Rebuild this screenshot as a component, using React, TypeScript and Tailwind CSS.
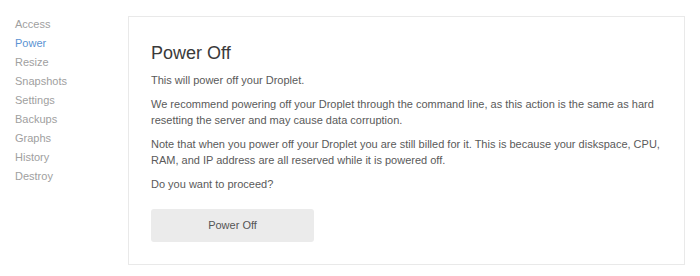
import React from 'react';

const menu = ['Access', 'Power', 'Resize', 'Snapshots', 'Settings', 'Backups', 'Graphs', 'History', 'Destroy'];

const App = () => {
    return (
        <div className="flex min-h-[276px] w-[700px] bg-white font-['Liberation_Sans',Arial,sans-serif]">
            {/* Side menu */}
            <ul className="w-[128px] shrink-0 pl-[15px] pt-[15px]">
                {menu.map((item) => (
                    <li
                        key={item}
                        className={`text-[11px] leading-[19px] ${item === 'Power' ? 'text-[#5b93d3]' : 'text-[#a0a0a0]'}`}
                    >
                        {item}
                    </li>
                ))}
            </ul>

            {/* Power off card */}
            <div className="mt-[16px] mb-[12px] w-[557px] border border-[#e9e9e9] bg-white px-[22px] pt-[24px] pb-[22px]">
                <h1 className="text-[18px] leading-[24px] text-[#3a3a3a] font-normal">Power Off</h1>
                <div className="mt-[7px] space-y-[8px] text-[11px] leading-[16px] text-[#5a5a5a]">
                    <p>This will power off your Droplet.</p>
                    <p>
                        We recommend powering off your Droplet through the command line, as this action is the same as hard
                        resetting the server and may cause data corruption.
                    </p>
                    <p>
                        Note that when you power off your Droplet you are still billed for it. This is because your diskspace, CPU,
                        RAM, and IP address are all reserved while it is powered off.
                    </p>
                    <p>Do you want to proceed?</p>
                </div>
                <button className="mt-[17px] h-[33px] w-[163px] rounded-[3px] bg-[#ebebeb] text-[11px] text-[#555]">
                    Power Off
                </button>
            </div>
        </div>
    );
};

export default App;
